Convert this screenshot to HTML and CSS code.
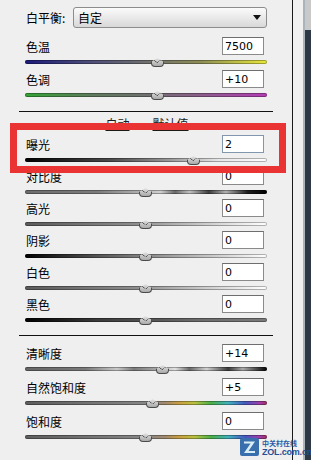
FILE: index.html
```html
<!DOCTYPE html>
<html lang="zh-CN">
<head>
    <meta charset="UTF-8">
    <meta name="viewport" content="width=device-width, initial-scale=1">
    <title>基本</title>
    <link rel="stylesheet" href="styles.css">
</head>
<body>

<div class="screen">
    <div class="panel">

        <div class="wb">
            <span class="wb-label">白平衡:</span>
            <div class="select">
                <span>自定</span>
                <span class="select-arrow"></span>
            </div>
        </div>

        <div class="group group-wb">
            <div class="adj">
                <div class="adj-top"><span>色温</span><input type="text" value="7500"></div>
                <div class="slider"><div class="track t-temp"></div><span class="thumb" style="left: 54.5%"></span></div>
            </div>
            <div class="adj">
                <div class="adj-top"><span>色调</span><input type="text" value="+10"></div>
                <div class="slider"><div class="track t-tint"></div><span class="thumb" style="left: 54.5%"></span></div>
            </div>
        </div>

        <hr class="sep">

        <div class="links">
            <a href="#">自动</a>
            <a href="#">默认值</a>
        </div>

        <div class="group group-tone">
            <div class="adj">
                <div class="adj-top"><span>曝光</span><input type="text" value="2" class="focus"></div>
                <div class="slider"><div class="track t-exposure"></div><span class="thumb" style="left: 69.4%"></span></div>
            </div>
            <div class="adj">
                <div class="adj-top"><span>对比度</span><input type="text" value="0"></div>
                <div class="slider"><div class="track t-contrast"></div><span class="thumb" style="left: 49.6%"></span></div>
            </div>
            <div class="adj">
                <div class="adj-top"><span>高光</span><input type="text" value="0"></div>
                <div class="slider"><div class="track t-light"></div><span class="thumb" style="left: 49.6%"></span></div>
            </div>
            <div class="adj">
                <div class="adj-top"><span>阴影</span><input type="text" value="0"></div>
                <div class="slider"><div class="track t-shadow"></div><span class="thumb" style="left: 49.6%"></span></div>
            </div>
            <div class="adj">
                <div class="adj-top"><span>白色</span><input type="text" value="0"></div>
                <div class="slider"><div class="track t-light"></div><span class="thumb" style="left: 49.6%"></span></div>
            </div>
            <div class="adj">
                <div class="adj-top"><span>黑色</span><input type="text" value="0"></div>
                <div class="slider"><div class="track t-black"></div><span class="thumb" style="left: 49.6%"></span></div>
            </div>
        </div>

        <hr class="sep">

        <div class="group group-presence">
            <div class="adj">
                <div class="adj-top"><span>清晰度</span><input type="text" value="+14"></div>
                <div class="slider"><div class="track t-clarity"></div><span class="thumb" style="left: 56.6%"></span></div>
            </div>
            <div class="adj">
                <div class="adj-top"><span>自然饱和度</span><input type="text" value="+5"></div>
                <div class="slider"><div class="track t-sat"></div><span class="thumb" style="left: 52.5%"></span></div>
            </div>
            <div class="adj">
                <div class="adj-top"><span>饱和度</span><input type="text" value="0"></div>
                <div class="slider"><div class="track t-sat"></div><span class="thumb" style="left: 49.6%"></span></div>
            </div>
        </div>

        <!-- annotation box drawn over the exposure row -->
        <div class="highlight"></div>
    </div>
    <div class="gutter"></div>
    <div class="scrollbar"><div class="scroll-top"></div></div>

    <div class="watermark">
        <svg class="wm-logo" width="19" height="18" viewBox="0 0 19 18">
            <rect x="0" y="0" width="19" height="18" rx="2" fill="#3a6fae"/>
            <path d="M4 3.5 H15 L8.5 13 H15 V15 H4 L10.5 5.5 H4 Z" fill="#d9eef5"/>
        </svg>
        <div class="wm-text">
            <span class="wm-cn">中关村在线</span>
            <span class="wm-en">ZOL.com.cn</span>
        </div>
    </div>
</div>

</body>
</html>
```

FILE: styles.css
```css
* {
    box-sizing: border-box;
}

html, body {
    margin: 0;
    padding: 0;
}

body {
    background: #efefef;
    font-family: "Noto Sans CJK SC", "Noto Sans", sans-serif;
    font-size: 12px;
    color: #000;
}

.screen {
    display: flex;
    position: relative;
    width: 311px;
    height: 460px;
    overflow: hidden;
}

.panel {
    position: relative;
    width: 293px;
    height: 460px;
    border-right: 1px solid #1a1a1a;
}

.gutter {
    width: 10px;
    background: #f1f1f1;
}

.scrollbar {
    width: 8px;
    background: #2d3a45;
    border-left: 2px solid #aab4bc;
}

.scroll-top {
    height: 30px;
    background: #c9c9c9;
}

/* white balance */

.wb {
    display: flex;
    align-items: center;
    margin: 7px 25px 0 26px;
    height: 21px;
}

.wb-label {
    width: 47px;
    line-height: 21px;
}

.select {
    flex: 1;
    display: flex;
    align-items: center;
    justify-content: space-between;
    height: 21px;
    padding: 0 5px 0 4px;
    border: 1px solid #8c8c8c;
    border-radius: 3px;
    background: linear-gradient(#fbfbfb, #e6e6e6 60%, #d8d8d8);
}

.select-arrow {
    width: 0;
    height: 0;
    border-left: 4px solid transparent;
    border-right: 4px solid transparent;
    border-top: 5px solid #111;
}

/* rows */

.group {
    margin: 0 25px;
}

.group-wb {
    margin-top: 9px;
}

.group-wb .adj {
    height: 33px;
}

.group-tone .adj {
    height: 32px;
}

.group-presence {
    margin-top: 8px;
}

.group-presence .adj {
    height: 34px;
}

.adj-top {
    display: flex;
    align-items: center;
    justify-content: space-between;
    height: 18px;
    padding: 0 3px 0 1px;
}

.adj-top input {
    width: 42px;
    height: 18px;
    margin: 0;
    padding: 0 2px;
    border: 1px solid #8a8a8a;
    border-top-color: #6e6e6e;
    background: #fff;
    font-family: "DejaVu Sans", sans-serif;
    font-size: 11px;
    color: #000;
}

.adj-top input.focus {
    border-color: #8296b0;
}

.slider {
    position: relative;
    height: 10px;
    margin-top: 1px;
}

.track {
    position: absolute;
    left: 0;
    right: 0;
    top: 4px;
    height: 4px;
    border-radius: 2px;
    box-shadow: inset 0 0 0 1px rgba(0, 0, 0, 0.3);
}

.thumb {
    position: absolute;
    top: 2px;
    width: 13px;
    height: 9px;
    margin-left: -6px;
    background: linear-gradient(#e4e4e4, #a9a9a9);
    border: 1px solid #4a4a4a;
    border-top: 0;
    border-radius: 0 0 4px 4px;
    clip-path: polygon(50% 0, 100% 45%, 100% 100%, 0 100%, 0 45%);
}

.thumb::before {
    content: "";
    position: absolute;
    left: -1px;
    right: -1px;
    top: 0;
    height: 5px;
    background: linear-gradient(to top right, transparent 46%, #4a4a4a 50%, transparent 60%) left / 50% 100% no-repeat,
                linear-gradient(to top left, transparent 46%, #4a4a4a 50%, transparent 60%) right / 50% 100% no-repeat;
}

.t-temp {
    background: linear-gradient(to right, #1a1a7c, #4a4a78 25%, #6f6f6f 50%, #8c8c58 72%, #e8e83c);
}

.t-tint {
    background: linear-gradient(to right, #36a236, #5e7a5e 28%, #707070 50%, #8a5f8a 72%, #b43cb4);
}

.t-exposure {
    background: linear-gradient(to right, #000, #4a4a4a 35%, #9a9a9a 60%, #e6e6e6 80%, #fff);
}

.t-contrast {
    background: linear-gradient(to right, #6c6c6c, #7c7c7c 30%, #b8b8b8 50%, #d0d0d0 56%, #6a6a6a 62%, #c0c0c0 68%, #3e3e3e 76%, #b0b0b0 83%, #1c1c1c 92%, #000);
}

.t-light {
    background: linear-gradient(to right, #5a5a5a, #8c8c8c 45%, #d8d8d8 80%, #fff);
}

.t-shadow {
    background: linear-gradient(to right, #000, #555 30%, #a0a0a0 60%, #fff);
}

.t-black {
    background: linear-gradient(to right, #000, #3a3a3a 30%, #6a6a6a 70%, #7a7a7a);
}

.t-clarity {
    background: linear-gradient(to right, #666, #7a7a7a 25%, #c8c8c8 38%, #7a7a7a 45%, #b0b0b0 56%, #e0e0e0 62%, #6a6a6a 68%, #d0d0d0 75%, #3a3a3a 84%, #aaa 90%, #000);
}

.t-sat {
    background: linear-gradient(to right, #5e5e5e, #868686 50%, #a08a6c 58%, #c8a040 64%, #b8c040 70%, #48b048 77%, #40b0c0 84%, #4658c0 91%, #a03ca8 97%, #a03060);
}

/* separators and links */

.sep {
    margin: 8px 19px 0;
    height: 1px;
    border: 0;
    background: #111;
}

.links {
    display: flex;
    justify-content: center;
    gap: 23px;
    height: 23px;
    line-height: 23px;
    padding-left: 2px;
}

.links a {
    color: #1a1a1a;
    text-decoration: underline;
}

.highlight {
    position: absolute;
    left: 10px;
    top: 123px;
    width: 276px;
    height: 50px;
    border: 7px solid #ea3434;
}

/* watermark */

.watermark {
    position: absolute;
    z-index: 2;
    left: 240px;
    top: 437px;
    display: flex;
    gap: 3px;
    align-items: center;
}

.wm-text {
    display: flex;
    flex-direction: column;
    line-height: 9px;
    padding-top: 2px;
}

.wm-cn {
    font-size: 7px;
    font-weight: bold;
    color: #2a5aa6;
}

.wm-en {
    font-family: "Liberation Sans", sans-serif;
    font-size: 9px;
    font-weight: bold;
    letter-spacing: -0.2px;
    color: #1f4f98;
}
```
